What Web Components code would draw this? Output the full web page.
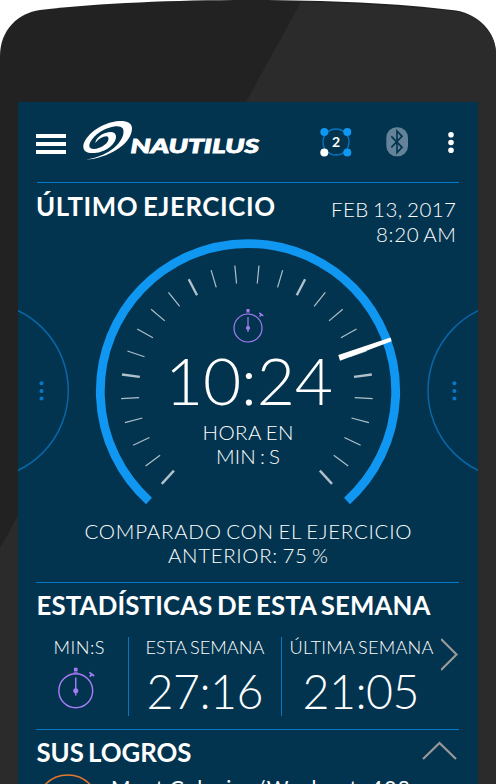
<!DOCTYPE html>
<html lang="es"><head><meta charset="utf-8"><title>Nautilus</title>
<style>body{margin:0;background:#fff;font-family:Lato,"Open Sans",sans-serif;color:#fff;overflow:hidden}</style></head>
<body>
<phone-shell><nautilus-app></nautilus-app></phone-shell>
<script>
const define=(name,html,after)=>customElements.define(name,class extends HTMLElement{
  connectedCallback(){
    if(this.shadowRoot)return;
    const t=document.createElement('template');t.innerHTML=html;
    this.attachShadow({mode:'open'}).append(t.content.cloneNode(true));
    if(after)after.call(this,this.shadowRoot);
  }
});

/* Single line of text, tracked to the width given in the "w" attribute. */
define('fit-label',`<style>
:host{display:block;white-space:nowrap;line-height:24px;font-size:20.500px;font-weight:300;word-spacing:-.08em}
span{display:inline-block}</style><span><slot></slot></span>`,function(root){
  const s=root.querySelector('span'),w=+this.getAttribute('w'),n=this.textContent.length;
  if(w){const d=(w-s.getBoundingClientRect().width)/(n-1);s.style.letterSpacing=d+'px';s.style.marginRight=-d+'px';}
});

define('phone-shell',`<style>
:host{display:grid;width:496px;height:784px;overflow:hidden}
svg,.screen{grid-area:1/1}
.screen{margin:102px 18px 0;background:#02344f;overflow:hidden;min-height:0}
</style>
<svg width="496" height="784"><path fill="#222" d="M0 784V56C0 30 18 13 40 10C100 3 175 0 248 0S396 3 456 10.500C478 14 496 32 496 54V784Z"/>
<path fill="#2b2b2b" d="M301 2C360 3 410 7 456 11.500C478 15 496 32 496 54V784H0V548Z"/></svg>
<div class="screen"><slot></slot></div>`);

define('brand-logo',`<style>:host{display:block;width:180px;height:44px}svg{display:block}</style>
<svg width="180" height="44" viewBox="0 0 180 44">
<path transform="translate(-64 -20) scale(.33333)" fill="#fff" d="M205 179C265 176 342 135 342 85C342 68 325 62 305 63C250 65 196 110 196 140C196 155 210 161 230 159C265 157 296 130 294 108C292 94 278 94 262 99C245 105 233 117 232 129C242 116 255 109 265 109C276 110 272 125 262 133C245 147 226 150 218 145C206 138 222 112 245 97C270 80 305 72 314 85C325 105 300 145 255 164C240 171 220 176 205 179Z" />
<text x="48.500" y="32.500" font-family="Lato" font-weight="900" font-style="italic" font-size="18.800" fill="#fff" stroke="#fff" stroke-width=".8" textLength="128.500" lengthAdjust="spacingAndGlyphs">NAUTILUS</text></svg>`);

define('stop-watch',`<style>:host{display:block}svg{display:block;width:var(--size,36px);height:var(--size,36px);overflow:visible}</style>
<svg viewBox="-18 -18 36 36" fill="none" stroke="#a57cf5" stroke-width="1.200">
<circle r="14"/><path d="M0-11V4"/><circle r="2.100" fill="#a57cf5" stroke="none"/>
<path d="M-1.500-19h3v3h-3z" fill="#a57cf5" stroke="none"/><path d="M-1.800-15.200h3.600" stroke-width=".6"/>
<path d="M11.300-15.200L15.200-12.200M13.300-13.500L11.600-11.600" stroke-width="1.500"/></svg>`);

define('app-bar',`<style>
:host{display:grid;grid-template-columns:30px 180px 1fr 34px 33px 22px 38.500px 10px;align-items:center;height:80px;padding:0 22px 0 18px;box-sizing:border-box}
svg{display:block}
.a{grid-column:4}.b{grid-column:6}.c{grid-column:8}
brand-logo{margin:-1px 0 0 16px}
</style>
<svg width="30" height="20" style="margin-top:4px" fill="#fff"><path d="M0 0h30v4H0zM0 8h30v4H0zM0 16h30v4H0z"/></svg>
<brand-logo></brand-logo>
<svg class="a" width="34" height="34" viewBox="318 125.300 34 34"><circle cx="335" cy="142.300" r="13" fill="none" stroke="#0875c4" stroke-width="1.300"/>
<g fill="#1097f2"><circle cx="323.300" cy="132.300" r="4"/><circle cx="346.300" cy="132.300" r="4"/><circle cx="346.300" cy="152.800" r="4"/></g><circle cx="323.300" cy="152.800" r="4" fill="#fff"/>
<text x="335" y="147.600" text-anchor="middle" font-family="Lato" font-weight="700" font-size="14" fill="#fff">2</text></svg>
<svg class="b" width="22" height="30" viewBox="256 54 66 90"><rect x="257" y="55" width="65" height="87" rx="31" fill="#658398"/>
<path fill="none" stroke="#02344f" stroke-width="5" d="M272 82L304 115L289 131V66L304 82L272 115"/></svg>
<svg class="c" width="10" height="24" fill="#fff"><circle cx="5" cy="4.800" r="2.800"/><circle cx="5" cy="12.500" r="2.800"/><circle cx="5" cy="20.200" r="2.800"/></svg>`);

define('workout-gauge',`<style>
:host{display:grid;justify-items:center;width:304px;height:304px}
svg.dial{grid-area:1/1;overflow:visible}
.in{grid-area:1/1;display:flex;flex-direction:column;align-items:center;padding-top:71px}
.t{font-size:66px;line-height:66px;margin:1px 0 0 2px}
stop-watch{margin-left:1px}
</style>
<svg class="dial" width="304" height="304" viewBox="-152 -152 304 304"></svg>
<div class="in"><stop-watch></stop-watch><fit-label class="t" w="168">10:24</fit-label>
<fit-label w="91" style="margin-top:7px">HORA EN</fit-label><fit-label w="64">MIN : S</fit-label></div>`,function(root){
  let ticks='';
  for(let i=0;i<13;i++)for(const s of[-1,1]){
    const a=(5.5+11*i)*Math.PI/180,x=Math.sin(a)*s,y=-Math.cos(a),m=i%5===2;
    ticks+=`<path d="M${x*126-1.1} ${y*126}L${x*108-1.1} ${y*108}" stroke-width="${m?2.4:1.2}"/>`;
  }
  root.querySelector('.dial').innerHTML=`<path d="M-99 109.900A147.700 147.700 0 1 1 99 109.900" fill="none" stroke="#1097f2" stroke-width="8.800"/><g stroke="#afc1cb">${ticks}</g><path fill="#fff" d="M90.300-36L142.500-53.500L143.700-49.700L92-30.200Z"/>`;
});

define('last-workout',`<style>
:host{display:grid;height:400px;box-sizing:border-box;grid-template:100%/100%}
.rule{grid-area:1/1;height:1px;background:#0878c6;margin:0 19px}
.side,.head,.mid,.cmp{grid-area:1/1}
.head{display:flex;justify-content:space-between;align-items:flex-start;padding:9px 22px 0 18px}
.title{font-size:25.800px;line-height:30px;font-weight:700}
.date{display:grid;justify-items:end;padding-top:6px}.date fit-label{line-height:25px}
.mid{justify-self:center;margin-top:57px}
.cmp{display:grid;align-content:start;justify-items:center;padding-top:337px}
</style>
<svg class="side" width="460" height="400" viewBox="18 182 460 400"><g fill="none" stroke="#0a66a6" stroke-width="1.500"><circle cx="-20.300" cy="390.500" r="88.600"/><circle cx="516.600" cy="390.500" r="88.600"/></g>
<g fill="#0878c6"><circle cx="41.500" cy="383.300" r="2"/><circle cx="41.500" cy="390.900" r="2"/><circle cx="41.500" cy="398.500" r="2"/><circle cx="454.400" cy="383.300" r="2"/><circle cx="454.400" cy="390.900" r="2"/><circle cx="454.400" cy="398.500" r="2"/></g></svg>
<div class="rule"></div>
<div class="head"><fit-label class="title" w="239">ÚLTIMO EJERCICIO</fit-label><div class="date"><fit-label w="125">FEB 13, 2017</fit-label><fit-label w="80">8:20 AM</fit-label></div></div>
<workout-gauge class="mid"></workout-gauge>
<div class="cmp"><fit-label w="327">COMPARADO CON EL EJERCICIO</fit-label><fit-label w="160">ANTERIOR: 75 %</fit-label></div>`);

define('week-stats',`<style>
:host{display:block;height:147px;margin:0 19px 0 18px;border-top:1px solid #0878c6;box-sizing:border-box}
.title{font-size:25.800px;line-height:30px;font-weight:700;margin:7px 0 0 .5px}
.row{display:grid;grid-template:79px/93px 153px 1fr 18px;margin-top:17px}
.row>div{display:flex;flex-direction:column;align-items:center;border-right:1px solid #0878c6}
.row>div.last{border:0}
.l{font-size:18.200px;line-height:21px}.n{font-size:46.500px;line-height:50px;margin-top:7.500px}
stop-watch{--size:43.500px;margin:11px 0 0 -12px}
</style>
<fit-label class="title" w="394">ESTADÍSTICAS DE ESTA SEMANA</fit-label>
<div class="row"><div><fit-label class="l" w="51" style="margin-left:-6px">MIN:S</fit-label><stop-watch></stop-watch></div>
<div><fit-label class="l" w="119">ESTA SEMANA</fit-label><fit-label class="n" w="117">27:16</fit-label></div>
<div class="last"><fit-label class="l" w="144">ÚLTIMA SEMANA</fit-label><fit-label class="n" w="117" style="margin-left:-1px">21:05</fit-label></div>
<svg width="18" height="36" fill="none" stroke="#999" stroke-width="2.200"><path d="M0 2L15.500 17.500L0 33"/></svg></div>`);

define('achievement-list',`<style>
:host{display:block;margin:0 19px 0 18px;border-top:1px solid #0878c6}
.top{display:flex;justify-content:space-between}
.title{font-size:25.800px;line-height:30px;font-weight:700;margin:7px 0 0 .5px}
.top svg{margin:11px 1px 0}
.item{display:grid;grid-template-columns:66px 1fr;column-gap:9px}
.item svg{margin-top:7px}
.m{font-size:21px;font-weight:400;margin-top:9px}
</style>
<div class="top"><fit-label class="title" w="155">SUS LOGROS</fit-label><svg width="36" height="20" fill="none" stroke="#999" stroke-width="2.200"><path d="M1 18L17.500 2L34 18"/></svg></div>
<div class="item"><svg width="66" height="66"><circle cx="31.700" cy="32.500" r="31.500" fill="none" stroke="#e5772c" stroke-width="1.500"/></svg><fit-label class="m" w="299">Most Calories/Workout: 408</fit-label></div>`);

define('nautilus-app',`<style>:host{display:block}</style><app-bar></app-bar><last-workout></last-workout><week-stats></week-stats><achievement-list></achievement-list>`);
</script></body></html>
